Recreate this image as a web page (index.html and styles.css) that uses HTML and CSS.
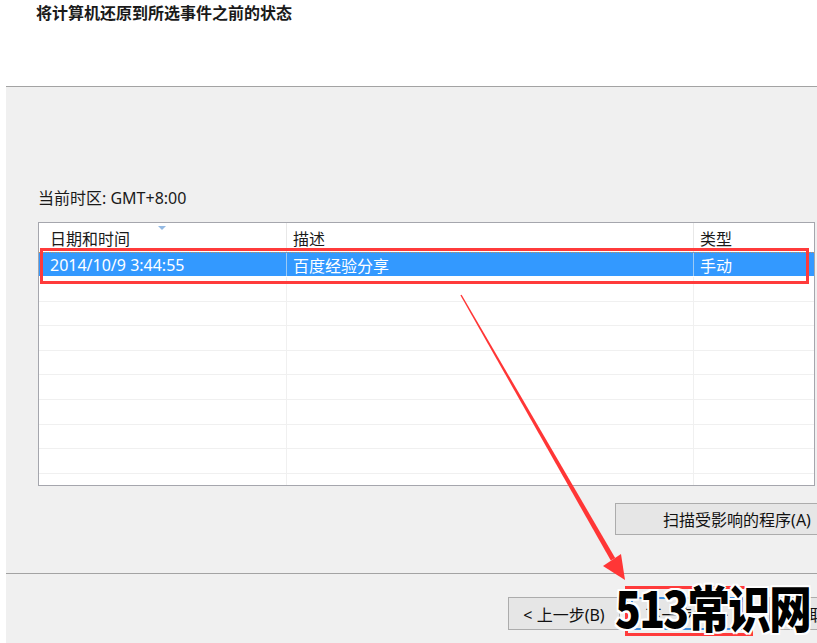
FILE: index.html
```html
<!DOCTYPE html>
<html lang="zh-CN">
<head>
<meta charset="utf-8">
<title>系统还原</title>
<link rel="stylesheet" href="styles.css">
</head>
<body>
<div class="page">
  <header class="top">
    <h1 class="title">将计算机还原到所选事件之前的状态</h1>
  </header>
  <section class="panel">
    <div class="content">
      <div class="tz">当前时区: GMT+8:00</div>
      <div class="grid">
        <div class="row head">
          <div class="cell c1">日期和时间<span class="sort"></span></div>
          <div class="cell c2">描述</div>
          <div class="cell c3">类型</div>
        </div>
        <div class="row sel">
          <div class="cell c1">2014/10/9 3:44:55</div>
          <div class="cell c2">百度经验分享</div>
          <div class="cell c3">手动</div>
        </div>
        <div class="row"><div class="cell c1"></div><div class="cell c2"></div><div class="cell c3"></div></div>
        <div class="row"><div class="cell c1"></div><div class="cell c2"></div><div class="cell c3"></div></div>
        <div class="row"><div class="cell c1"></div><div class="cell c2"></div><div class="cell c3"></div></div>
        <div class="row"><div class="cell c1"></div><div class="cell c2"></div><div class="cell c3"></div></div>
        <div class="row"><div class="cell c1"></div><div class="cell c2"></div><div class="cell c3"></div></div>
        <div class="row"><div class="cell c1"></div><div class="cell c2"></div><div class="cell c3"></div></div>
        <div class="row"><div class="cell c1"></div><div class="cell c2"></div><div class="cell c3"></div></div>
        <div class="row"><div class="cell c1"></div><div class="cell c2"></div><div class="cell c3"></div></div>
        <div class="row"><div class="cell c1"></div><div class="cell c2"></div><div class="cell c3"></div></div>
      </div>
      <div class="scan-row">
        <button class="btn scan">扫描受影响的程序(A)</button>
      </div>
    </div>
    <div class="sep"></div>
    <div class="footer">
      <button class="btn nav">&lt; 上一步(B)</button>
      <button class="btn nav focus">下一步(N) &gt;</button>
      <button class="btn nav cancel">取消</button>
    </div>
  </section>

  <div class="mark-row"></div>
  <div class="mark-btn"></div>
  <svg class="arrow" width="817" height="643" viewBox="0 0 817 643">
    <polygon points="460.4,295.3 610.8,560.6 615.2,558.0 461.6,294.7" fill="#ff3636"/>
    <polygon points="625,580 603,566 621,554" fill="#ff3636"/>
  </svg>
  <div class="watermark">513常识网</div>
</div>
</body>
</html>
```
FILE: styles.css
```css
* { box-sizing: border-box; }

html, body {
  margin: 0;
  padding: 0;
  background: #ffffff;
}

body {
  width: 817px;
  height: 643px;
  overflow: hidden;
  font-family: "Noto Sans", "Noto Sans CJK SC", sans-serif;
  font-size: 16px;
  color: #000;
}

.page {
  position: relative;
  width: 817px;
  height: 643px;
  overflow: hidden;
}

.top {
  height: 86px;
  padding: 2px 0 0 36px;
}

.title {
  margin: 0;
  font-size: 16px;
  line-height: 22px;
  font-weight: bold;
  color: #1a1a1a;
}

.panel {
  margin-left: 6px;
  width: 880px;
  height: 557px;
  background: #f0f0f0;
  border-top: 1px solid #a3a3a3;
}

.content {
  padding: 99px 27px 0 32px;
}

.tz {
  line-height: 24px;
  color: #1a1a1a;
}

.grid {
  margin-top: 12px;
  width: 777px;
  height: 264px;
  background: #fff;
  border: 1px solid #a5a6ad;
  overflow: hidden;
}

.row {
  display: flex;
  height: 24.6px;
  border-bottom: 1px solid #f0f0f0;
}

.cell {
  display: flex;
  align-items: center;
  height: 100%;
  white-space: nowrap;
}

.c1 { width: 248px; padding-left: 11px; border-right: 1px solid #f0f0f0; }
.c2 { width: 407px; padding-left: 6px; border-right: 1px solid #f0f0f0; }
.c3 { flex: 1; padding-left: 6px; }

.row.head {
  height: 29px;
  border-bottom: none;
  color: #1a1a1a;
}

.row.head .cell { padding-top: 1px; }
.row.head .c1 { position: relative; border-right-color: #e8e8e8; }
.row.head .c2 { border-right-color: #e8e8e8; }

.sort {
  position: absolute;
  left: 119px;
  top: 3px;
  width: 0;
  height: 0;
  border-left: 4px solid transparent;
  border-right: 4px solid transparent;
  border-top: 4px solid #93b9e3;
}

.row.sel {
  height: 25px;
  background: #3399ff;
  color: #fff;
  border-top: 1px dotted #c8905a;
  border-bottom: 1px solid #ffffff;
}

.row.sel .c1, .row.sel .c2 { border-right-color: #9ccaf5; }

.scan-row {
  display: flex;
  justify-content: flex-end;
  margin-top: 17px;
}

.btn {
  font-family: "Noto Sans", "Noto Sans CJK SC", sans-serif;
  font-size: 16px;
  color: #111;
  background: #e6e6e6;
  border: 1px solid #acacac;
  border-radius: 0;
  padding: 0;
  margin: 0;
}

.scan {
  width: 244px;
  height: 32px;
}

.sep {
  margin-top: 38px;
  border-top: 1px solid #a3a3a3;
}

.footer {
  display: flex;
  justify-content: flex-end;
  gap: 11px;
  padding: 23px 5px 0 0;
}

.nav {
  width: 112px;
  height: 33px;
}

.nav.cancel {
  margin-left: 15px;
}

.nav.focus {
  border: 2px solid #3c8ee0;
}

/* annotations laid over the screenshot */
.mark-row {
  position: absolute;
  left: 40px;
  top: 248px;
  width: 769px;
  height: 36px;
  border: 3px solid #ff3b3b;
}

.mark-btn {
  position: absolute;
  left: 625px;
  top: 586px;
  width: 128px;
  height: 50px;
  border: 3px solid #ff3b3b;
}

.arrow {
  position: absolute;
  left: 0;
  top: 0;
}

.watermark {
  position: absolute;
  left: 615px;
  top: 576px;
  font-family: "Noto Sans CJK SC", sans-serif;
  font-size: 50px;
  line-height: 60px;
  font-weight: 900;
  letter-spacing: -2px;
  color: #000;
  white-space: nowrap;
  transform: scaleX(0.85);
  transform-origin: left top;
  text-shadow:
    2px 0 0 #fff, -2px 0 0 #fff, 0 2px 0 #fff, 0 -2px 0 #fff,
    2px 2px 0 #fff, -2px -2px 0 #fff, 2px -2px 0 #fff, -2px 2px 0 #fff;
}
```
